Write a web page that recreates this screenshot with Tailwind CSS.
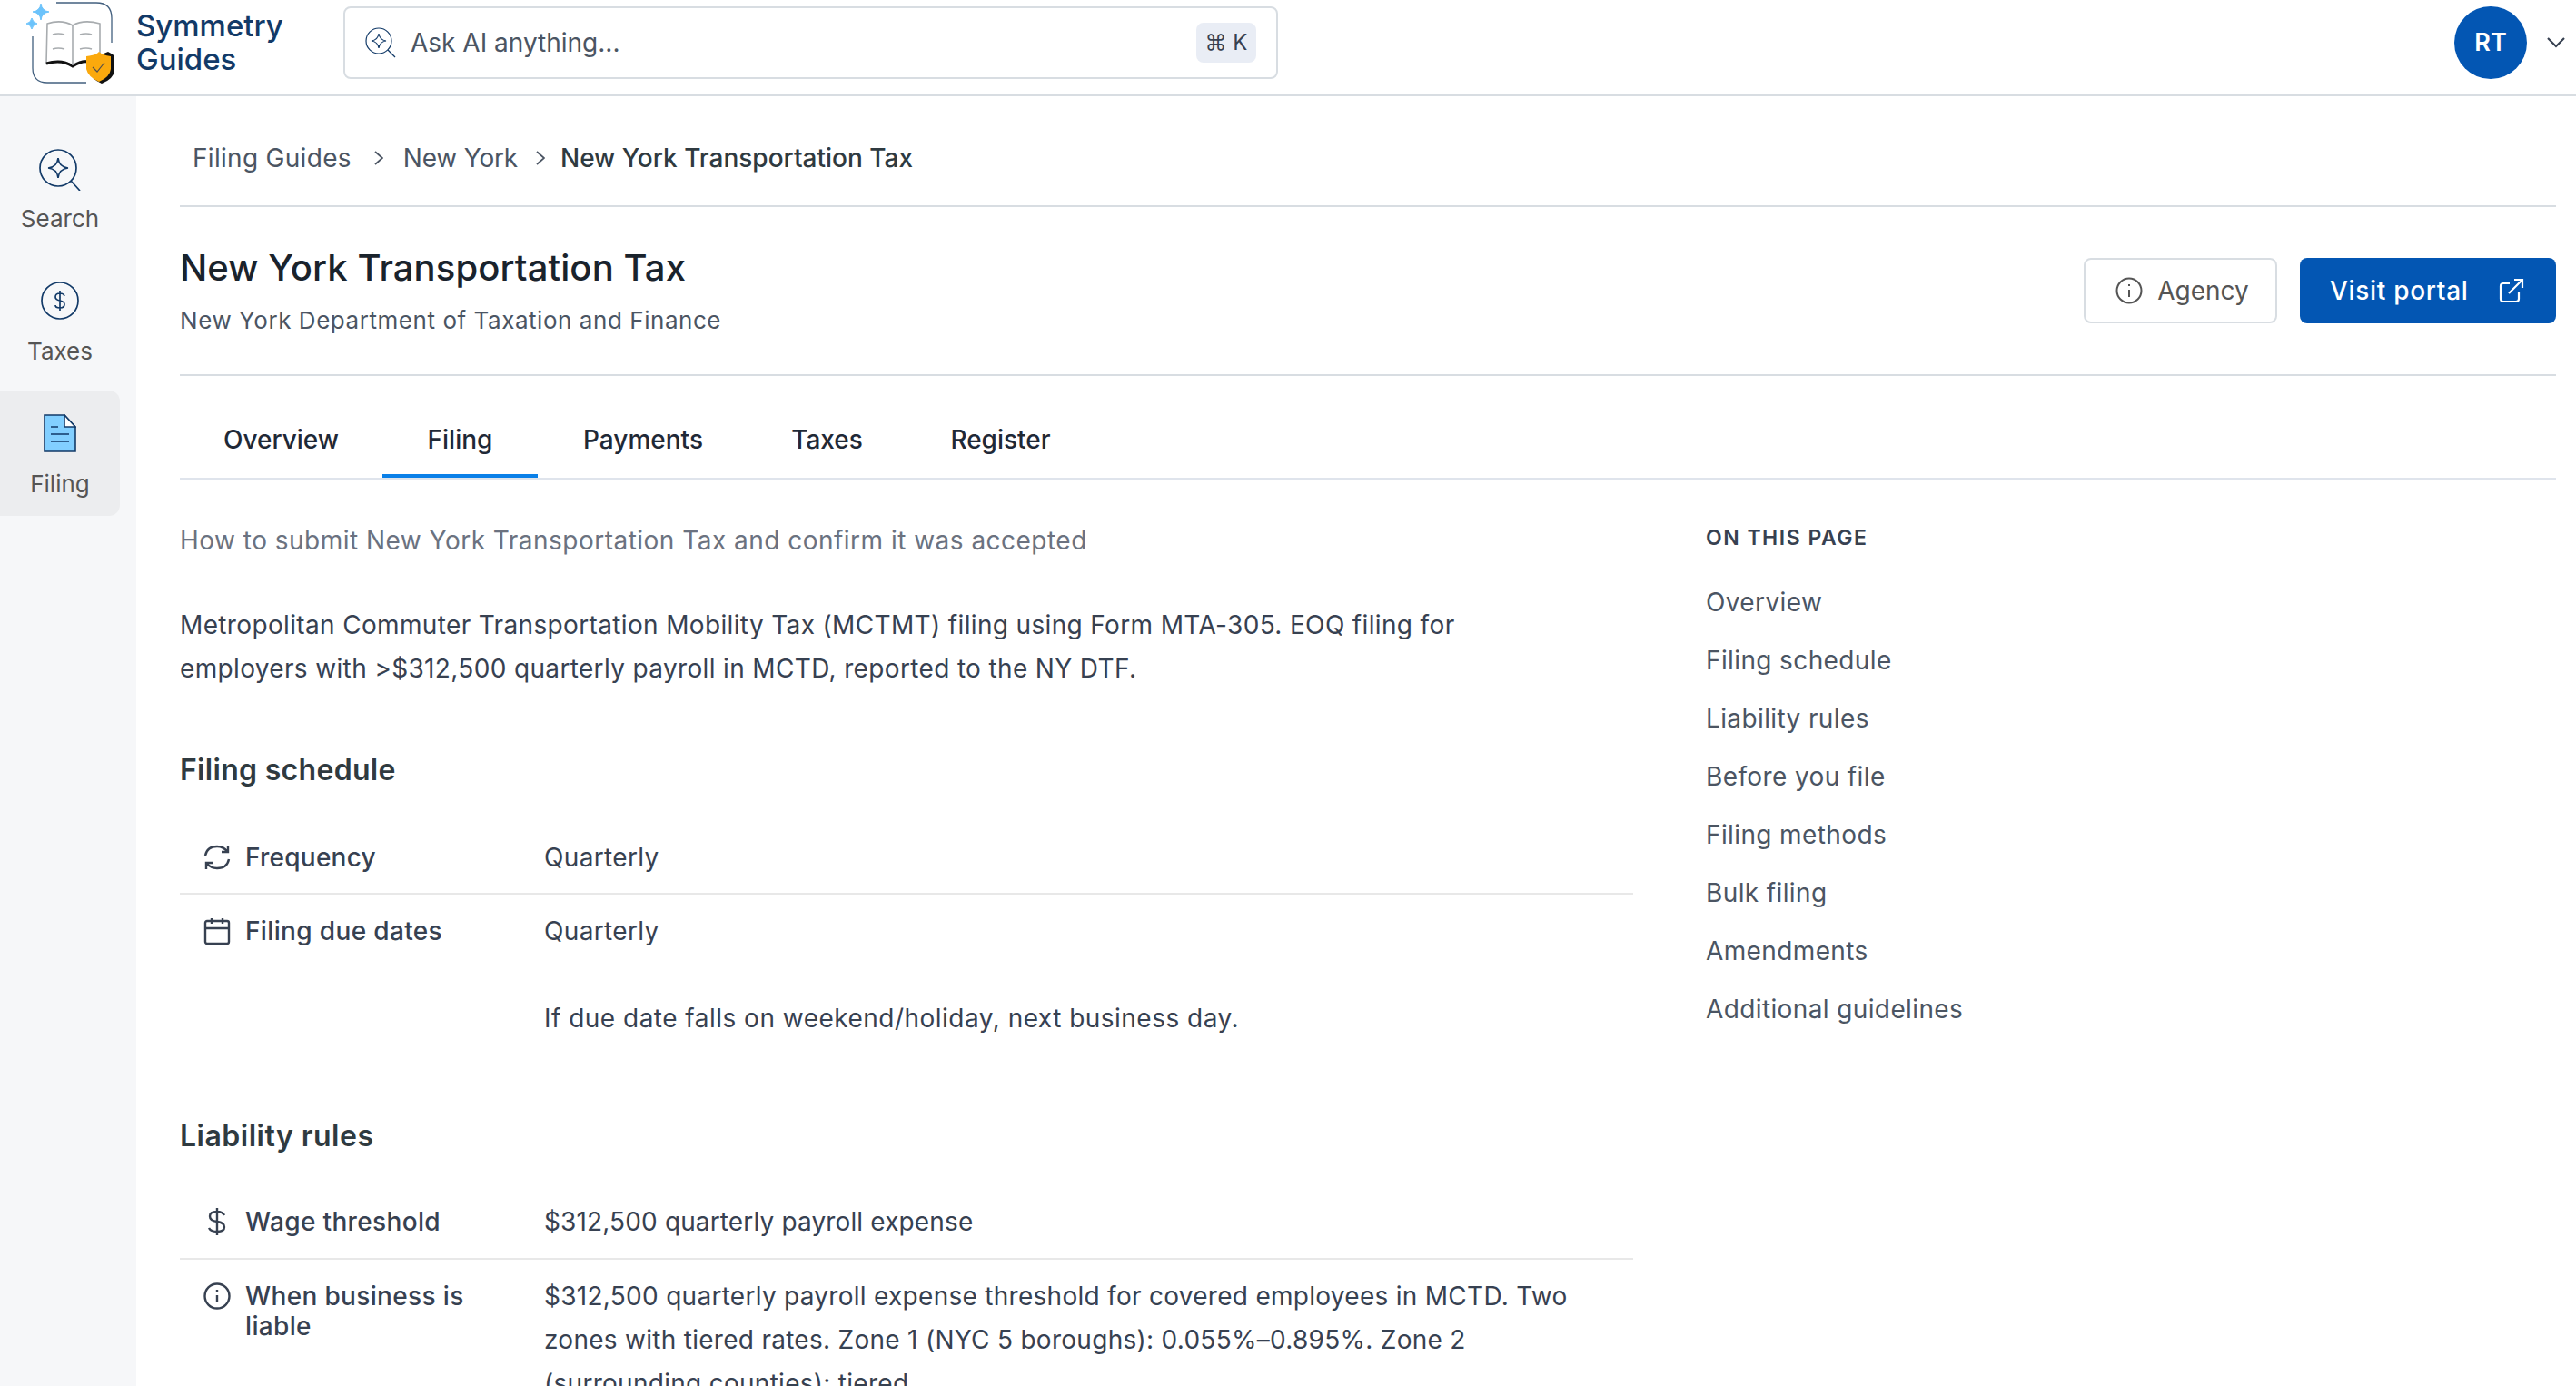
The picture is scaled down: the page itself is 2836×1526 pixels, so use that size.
<!DOCTYPE html>
<html lang="en">
<head>
  <meta charset="UTF-8">
  <title>Symmetry Guides - New York Transportation Tax</title>
  <script src="https://cdn.jsdelivr.net/npm/@tailwindcss/browser@4"></script>
</head>
<body class="bg-white font-['Inter',sans-serif] text-[#374151]">
<div class="flex h-[1526px] w-[2836px] flex-col overflow-hidden">

  <!-- top bar -->
  <header class="flex h-[106px] shrink-0 items-center border-b-2 border-[#d8dde2] pb-[10px] pr-[12px]">
    <svg class="ml-[20px] h-[100px] w-[120px] shrink-0 self-start" viewBox="0 0 120 100" fill="none">
      <path d="M42 3H86Q103 3 103 20V47M16 40V75Q16 91 32 91H75" stroke="#43607f" stroke-width="1.3"/>
      <path d="M25 4Q26 12 34 13Q26 14 25 22Q24 14 16 13Q24 12 25 4Z" fill="#6cc3fb" stroke="#6cc3fb"/>
      <path d="M15 20Q16 25 21 26Q16 27 15 32Q14 27 9 26Q14 25 15 20Z" fill="#6cc3fb" stroke="#6cc3fb"/>
      <path d="M32 26Q48 21 60 28Q72 21 90 26V68Q72 64 60 72Q48 64 31 70Z" fill="#fff" stroke="#a8acaf" stroke-width="1.6"/>
      <path d="M31 70Q48 65 60 73Q70 67 76 68" stroke="#111" stroke-width="3"/>
      <path d="M60 28V72" stroke="#a8acaf" stroke-width="1.6"/>
      <path d="M38 38Q44 36 51 38M68 38Q75 36 81 38M38 54Q44 52 51 54M68 54Q75 52 81 54" stroke="#a8acaf" stroke-width="1.6"/>
      <path d="M77 62Q89 61 97 57Q104 61 104 62V78Q103 87 90 92Q78 87 76 78Z" fill="#111" transform="translate(2 0)"/>
      <path d="M75 62Q86 61 89 57Q93 61 102 62V76Q101 85 89 90Q77 85 75 76Z" fill="#fba90d"/>
      <path d="M82 74L87 79L95 69" stroke="#56504a" stroke-width="1.2"/>
    </svg>
    <div class="ml-[10px] w-[206px] shrink-0 text-[33px] font-medium leading-[37px] text-[#123a68]">Symmetry<br>Guides</div>
    <div class="ml-[22px] flex h-[80px] w-[1029px] shrink-0 items-center rounded-[8px] border-2 border-[#d8dde2] pl-[22px] pr-[22px]">
      <svg class="h-[34px] w-[34px] shrink-0" viewBox="0 0 34 34" fill="none" stroke="#123a68" stroke-width="1.2">
        <circle cx="15" cy="15" r="14"/>
        <path d="M25 25L33 33"/>
        <path d="M15 7Q16 14 23 15Q16 16 15 23Q14 16 7 15Q14 14 15 7Z"/>
      </svg>
      <span class="ml-[16px] flex-1 text-[28px] text-[#4b5563]">Ask AI anything...</span>
      <span class="flex h-[44px] w-[66px] items-center justify-center rounded-[8px] bg-[#e9edf5] text-[24px] text-[#374151]">⌘ K</span>
    </div>
    <div class="ml-auto flex h-[80px] w-[80px] items-center justify-center rounded-full bg-[#0356b3] text-[27px] font-semibold text-white">RT</div>
    <svg class="ml-[22px] h-[12px] w-[20px]" viewBox="0 0 20 12" fill="none" stroke="#374151" stroke-width="2.2"><path d="M1 1L10 10L19 1"/></svg>
  </header>

  <div class="flex min-h-0 flex-1">
    <!-- sidebar -->
    <aside class="flex w-[150px] shrink-0 flex-col gap-[8px] bg-[#f6f7f9] pr-[18px] pt-[32px] text-[26px] text-[#555]">
      <div class="flex h-[138px] flex-col items-center pt-[26px]">
        <svg class="h-[46px] w-[46px]" viewBox="0 0 46 46" fill="none" stroke="#123a68" stroke-width="1.7">
          <circle cx="21" cy="21" r="20"/>
          <path d="M35 35L45 46"/>
          <path d="M21 10Q22 20 32 21Q22 22 21 32Q20 22 10 21Q20 20 21 10Z"/>
        </svg>
        <span class="mt-[11px]">Search</span>
      </div>
      <div class="flex h-[138px] flex-col items-center pt-[26px]">
        <svg class="h-[42px] w-[42px]" viewBox="0 0 42 42" fill="none" stroke="#123a68" stroke-width="1.7">
          <circle cx="21" cy="21" r="20"/>
          <path d="M26 16Q25 13 21 13Q16 13 16 17Q16 20 21 21Q26 22 26 25Q26 29 21 29Q16 29 16 26M21 10V32"/>
        </svg>
        <span class="mt-[15px]">Taxes</span>
      </div>
      <div class="flex h-[138px] flex-col items-center rounded-r-[12px] bg-[#ecedef] pt-[26px]">
        <svg class="h-[42px] w-[36px]" viewBox="0 0 36 42" fill="none" stroke="#123a68" stroke-width="1.6">
          <path d="M1 1H23L35 14V41H1Z" fill="#82cfff"/>
          <path d="M23 1V14H35Z" fill="#fff"/>
          <path d="M8 14H16M8 22H28M8 30H28"/>
        </svg>
        <span class="mt-[15px]">Filing</span>
      </div>
    </aside>

    <!-- main column -->
    <main class="min-w-0 flex-1 pl-[48px] pr-[22px]">
      <nav class="flex h-[122px] items-center border-b-2 border-[#d8dde2] pl-[14px] pt-[16px] text-[28px] text-[#4b5563]">
        <span class="tracking-[0.3px]">Filing Guides</span>
        <svg class="ml-[25px] mr-[22px] h-[18px] w-[10px]" viewBox="0 0 10 18" fill="none" stroke="#4b5563" stroke-width="1.8"><path d="M1 2L9 9L1 16"/></svg>
        <span class="tracking-[-0.2px]">New York</span>
        <svg class="ml-[20px] mr-[17px] h-[18px] w-[10px]" viewBox="0 0 10 18" fill="none" stroke="#4b5563" stroke-width="1.8"><path d="M1 2L9 9L1 16"/></svg>
        <span class="font-medium text-[#2f3a40]">New York Transportation Tax</span>
      </nav>

      <section class="flex h-[186px] items-start justify-between border-b-2 border-[#d8dde2]">
        <div>
          <h1 class="mt-[44px] text-[40px] font-medium leading-[46px] tracking-[0.1px] text-[#1a232c]">New York Transportation Tax</h1>
          <p class="mt-[19px] text-[26px] leading-[32px] tracking-[0.55px] text-[#4b5563]">New York Department of Taxation and Finance</p>
        </div>
        <div class="mt-[56px] flex gap-[25px]">
          <button class="flex h-[72px] w-[213px] items-center justify-center gap-[16px] rounded-[8px] border-2 border-[#d8dde2] pl-[4px] text-[28px] text-[#555]">
            <svg class="h-[30px] w-[30px]" viewBox="0 0 30 30" fill="none" stroke="#555" stroke-width="2">
              <circle cx="15" cy="15" r="13.5"/>
              <path d="M15 14V22M15 8V10"/>
            </svg>
            Agency
          </button>
          <button class="flex h-[72px] w-[282px] items-center justify-start gap-[33px] rounded-[8px] bg-[#0356b3] pl-[33px] text-[28px] font-medium tracking-[0.7px] text-white">
            Visit portal
            <svg class="h-[28px] w-[28px]" viewBox="0 0 28 28" fill="none" stroke="#fff" stroke-width="2.2">
              <path d="M12 6H5Q2 6 2 9V23Q2 26 5 26H19Q22 26 22 23V16"/>
              <path d="M11 17L26 2M17 2H26V11"/>
            </svg>
          </button>
        </div>
      </section>

      <div class="flex h-[114px] items-end border-b-2 border-[#dfe4ec] text-[28px] font-medium text-[#1f2937]">
        <a class="flex h-[114px] w-[223px] items-center justify-center border-b-4 border-transparent pt-[34px]">Overview</a>
        <a class="flex h-[114px] w-[171px] items-center justify-center border-b-4 border-[#0a80e8] pt-[34px]">Filing</a>
        <a class="flex h-[114px] w-[232px] items-center justify-center border-b-4 border-transparent pt-[34px]">Payments</a>
        <a class="flex h-[114px] w-[173px] items-center justify-center border-b-4 border-transparent pt-[34px]">Taxes</a>
        <a class="flex h-[114px] w-[209px] items-center justify-center border-b-4 border-transparent pt-[34px]">Register</a>
      </div>

      <div class="flex">
        <!-- article -->
        <article class="w-[1600px] shrink-0 text-[28px] leading-[48px] tracking-[0.35px] text-[#374151]">
          <p class="mt-[43px] tracking-[0.48px] text-[#6b7280]">How to submit New York Transportation Tax and confirm it was accepted</p>
          <p class="mt-[45px] w-[1500px]">Metropolitan Commuter Transportation Mobility Tax (MCTMT) filing using Form MTA-305. EOQ filing for employers with &gt;$312,500 quarterly payroll in MCTD, reported to the NY DTF.</p>

          <h2 class="mt-[68px] text-[32px] font-semibold leading-[40px] tracking-[0.3px] text-[#2f3a40]">Filing schedule</h2>
          <div class="mt-[52px] flex border-b-2 border-[#e8e8e8] pb-[15px]">
            <div class="flex w-[401px] shrink-0 items-center pl-[26px] font-medium tracking-[0.25px]">
              <svg class="h-[30px] w-[30px] shrink-0" viewBox="0 0 30 30" fill="none" stroke="#374151" stroke-width="2.4">
                <path d="M2 13Q4 3 15 3Q22 3 27 9M27 2V9H20"/>
                <path d="M28 17Q26 27 15 27Q8 27 3 21M3 28V21H10"/>
              </svg>
              <span class="ml-[16px]">Frequency</span>
            </div>
            <div>Quarterly</div>
          </div>
          <div class="mt-[16px] flex">
            <div class="flex h-[48px] w-[401px] shrink-0 items-center pl-[26px] font-medium">
              <svg class="h-[30px] w-[30px] shrink-0" viewBox="0 0 30 30" fill="none" stroke="#374151" stroke-width="2.4">
                <rect x="2" y="4" width="26" height="25" rx="2"/>
                <path d="M2 12H28M9 1V7M21 1V7"/>
              </svg>
              <span class="ml-[16px]">Filing due dates</span>
            </div>
            <div>Quarterly<p class="mt-[48px] tracking-[0.48px]">If due date falls on weekend/holiday, next business day.</p></div>
          </div>

          <h2 class="mt-[86px] text-[32px] font-semibold leading-[40px] tracking-[0.5px] text-[#2f3a40]">Liability rules</h2>
          <div class="mt-[50px] flex border-b-2 border-[#e8e8e8] pb-[16px]">
            <div class="flex w-[401px] shrink-0 items-center pl-[26px] font-medium">
              <svg class="h-[30px] w-[30px] shrink-0" viewBox="0 0 30 30" fill="none" stroke="#374151" stroke-width="2.4">
                <path d="M23 8Q21 4 15 4Q7 4 7 9Q7 14 15 15Q23 16 23 21Q23 26 15 26Q8 26 6 22M15 0V30"/>
              </svg>
              <span class="ml-[16px]">Wage threshold</span>
            </div>
            <div class="tracking-[0.14px]">$312,500 quarterly payroll expense</div>
          </div>
          <div class="mt-[16px] flex">
            <div class="flex w-[401px] shrink-0 items-start pl-[26px] font-medium leading-[33px]">
              <svg class="mt-[9px] h-[30px] w-[30px] shrink-0" viewBox="0 0 30 30" fill="none" stroke="#374151" stroke-width="2.4">
                <circle cx="15" cy="15" r="13.5"/>
                <path d="M15 14V22M15 8V10"/>
              </svg>
              <span class="ml-[16px] mt-[8px] w-[270px]">When business is liable</span>
            </div>
            <div class="w-[1160px] tracking-[0.28px]">$312,500 quarterly payroll expense threshold for covered employees in MCTD. Two zones with tiered rates. Zone 1 (NYC 5 boroughs): 0.055%–0.895%. Zone 2 (surrounding counties): tiered.</div>
          </div>
        </article>

        <!-- on this page -->
        <aside class="ml-[80px] pt-[48px] text-[28px] tracking-[0.38px] text-[#4b5563]">
          <div class="text-[23px] font-semibold uppercase leading-[32px] tracking-[1.5px] text-[#374151]">On this page</div>
          <ul class="mt-[31px] flex flex-col gap-[16px] leading-[48px]">
            <li>Overview</li>
            <li>Filing schedule</li>
            <li>Liability rules</li>
            <li>Before you file</li>
            <li>Filing methods</li>
            <li>Bulk filing</li>
            <li>Amendments</li>
            <li>Additional guidelines</li>
          </ul>
        </aside>
      </div>
    </main>
  </div>
</div>
</body>
</html>
